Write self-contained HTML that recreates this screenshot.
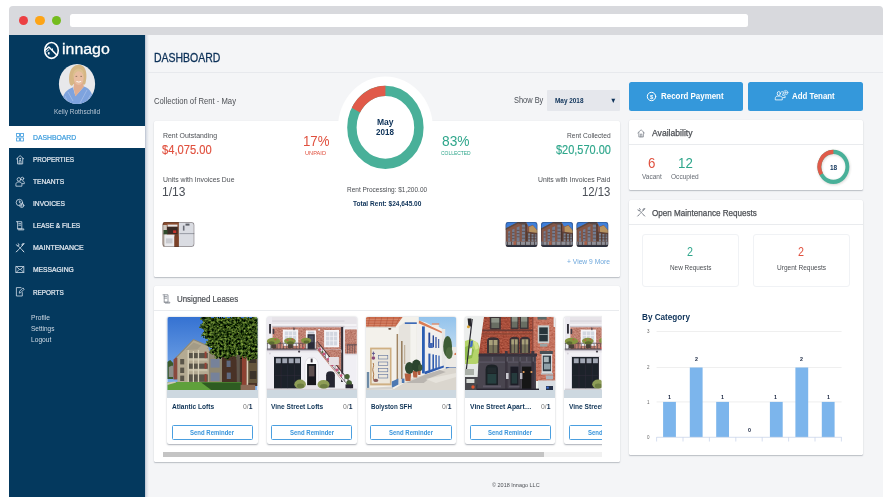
<!DOCTYPE html>
<html lang="en">
<head>
<meta charset="utf-8">
<title>Innago Dashboard</title>
<style>
html,body{margin:0;padding:0}
body{width:890px;height:500px;overflow:hidden;position:relative;background:#fff;font-family:"Liberation Sans",Arial,sans-serif}
div,span,svg{position:absolute;box-sizing:border-box}
.t i{font-style:normal;font-weight:400;color:#777}
.t{white-space:nowrap;line-height:1;transform-origin:0 50%;display:block}
.chrome{left:9px;top:6px;width:874px;height:29.2px;background:#d8d9dd;border-radius:4px 4px 0 0}
.dot{width:9.2px;height:9.2px;border-radius:50%;top:15.6px}
.url{left:69.8px;top:14px;width:677.8px;height:12.7px;background:#fff;border-radius:2.5px}
.page{left:9px;top:35px;width:874px;height:461.8px;background:#f4f5f7}
.side{left:9px;top:35px;width:136px;height:461.8px;background:#04395e}
.sideshadow{left:145px;top:35px;width:4px;height:461.8px;background:linear-gradient(90deg,#b9c1cf,#dde1e8 40%,#f4f5f7)}
.hline{left:146.5px;top:72px;width:736.5px;height:1px;background:#e7e9ed}
.active{left:9px;top:126px;width:135.9px;height:22px;background:#fff}
.card{background:#fff;border-radius:1.5px;box-shadow:0 1px 1.2px rgba(40,50,70,.28),0 0 1px rgba(40,50,70,.10)}
.div{height:1px;background:#e9ebee}
.btn{background:#3498db;border-radius:2.5px;height:28.7px;top:82px}
.sel{left:547.2px;top:90.3px;width:72.8px;height:20.6px;background:#e5e7ec;border-radius:1px}
.box{border:1px solid #f0f2f5;border-radius:3px;top:234.1px;width:97.3px;height:53.2px}
.lc{top:317px;width:90.4px;height:126.6px;background:#fff;border-radius:2px;box-shadow:0 .6px 1.6px rgba(30,40,60,.38)}
.strip{left:0;top:73px;width:90.4px;height:7.8px;background:#cdd8e0}
.rb{left:4.6px;top:108.2px;width:81.2px;height:14.4px;border:1px solid #4a9fe0;border-radius:1.5px}
.clip{left:160px;top:312px;width:441.6px;height:140px;overflow:hidden}
</style>
</head>
<body>
<div class="chrome"></div>
<div class="dot" style="left:18.8px;background:#ec4043"></div>
<div class="dot" style="left:35.4px;background:#fda416"></div>
<div class="dot" style="left:51.9px;background:#74bc1d"></div>
<div class="url"></div>
<div class="page"></div>
<div class="side"></div>
<div class="sideshadow"></div>
<div class="hline"></div>
<div class="active"></div>

<!-- collection of rent -->
<div class="card" style="left:153.5px;top:121px;width:466px;height:155.6px"></div>
<div class="sel"></div>

<!-- unsigned leases -->
<div class="card" style="left:153.5px;top:286px;width:466px;height:176.2px"></div>
<div class="div" style="left:153.5px;top:310.3px;width:465.8px"></div>
<div class="clip">
  <div class="lc" style="left:7.2px;top:5px"><div class="strip"></div><div class="rb"></div></div>
  <div class="lc" style="left:106.5px;top:5px"><div class="strip"></div><div class="rb"></div></div>
  <div class="lc" style="left:205.8px;top:5px"><div class="strip"></div><div class="rb"></div></div>
  <div class="lc" style="left:305px;top:5px"><div class="strip"></div><div class="rb"></div></div>
  <div class="lc" style="left:404.4px;top:5px"><div class="strip"></div><div class="rb"></div></div>
</div>
<div style="left:163.2px;top:452.1px;width:438.4px;height:4.6px;background:#f1f1f1"></div>
<div style="left:163.2px;top:452.1px;width:380.6px;height:4.6px;background:#c4c4c4"></div>

<!-- right column -->
<div class="btn" style="left:628.6px;width:114.5px"></div>
<div class="btn" style="left:748px;width:114.6px"></div>
<div class="card" style="left:628.6px;top:120px;width:234px;height:70.4px"></div>
<div class="div" style="left:628.6px;top:143.8px;width:234px"></div>
<div class="card" style="left:628.6px;top:200.3px;width:234px;height:254.7px"></div>
<div class="div" style="left:628.6px;top:223.6px;width:234px"></div>
<div class="box" style="left:641.8px"></div>
<div class="box" style="left:752.6px"></div>

<svg width="890" height="500" viewBox="0 0 890 500" style="left:0;top:0">
<defs>
  <filter id="soft2" x="-20%" y="-20%" width="140%" height="140%"><feGaussianBlur stdDeviation=".9"/></filter>
  <filter id="brick2" x="0" y="0" width="100%" height="100%" color-interpolation-filters="sRGB">
    <feTurbulence type="fractalNoise" baseFrequency=".45 .8" numOctaves="2" seed="9" result="n"/>
    <feColorMatrix in="n" type="matrix" values=".3 0 0 0 .49  .27 0 0 0 .16  .24 0 0 0 .10  0 0 0 0 1" result="c"/>
    <feComposite in="c" in2="SourceGraphic" operator="in"/>
  </filter>
  <filter id="brick3" x="0" y="0" width="100%" height="100%" color-interpolation-filters="sRGB">
    <feTurbulence type="fractalNoise" baseFrequency=".45 .8" numOctaves="2" seed="4" result="n"/>
    <feColorMatrix in="n" type="matrix" values=".24 0 0 0 .64  .27 0 0 0 .30  .27 0 0 0 .22  0 0 0 0 1" result="c"/>
    <feComposite in="c" in2="SourceGraphic" operator="in"/>
  </filter>
  <filter id="brick" x="0" y="0" width="100%" height="100%" color-interpolation-filters="sRGB">
    <feTurbulence type="fractalNoise" baseFrequency=".5 .9" numOctaves="2" seed="5" result="n"/>
    <feColorMatrix in="n" type="matrix" values=".22 0 0 0 .64  .28 0 0 0 .36  .28 0 0 0 .30  0 0 0 0 1" result="c"/>
    <feComposite in="c" in2="SourceGraphic" operator="in"/>
  </filter>
  <filter id="leaf" x="0" y="0" width="100%" height="100%" color-interpolation-filters="sRGB">
    <feTurbulence type="fractalNoise" baseFrequency=".42" numOctaves="3" seed="11" result="n"/>
    <feDisplacementMap in="SourceGraphic" in2="n" scale="5" xChannelSelector="R" yChannelSelector="G" result="shape"/>
    <feColorMatrix in="n" type="matrix" values="1.05 0 0 0 -.33  1.15 0 0 0 -.28  .55 0 0 0 -.19  0 0 0 0 1" result="c"/>
    <feComposite in="c" in2="shape" operator="in" result="cc"/>
    <feGaussianBlur in="cc" stdDeviation=".3"/>
  </filter>
  <filter id="soft" x="-5%" y="-5%" width="110%" height="110%"><feGaussianBlur stdDeviation=".35"/></filter>
  <clipPath id="cpPhoto"><path d="M0 2 Q0 0 2 0 H88.4 Q90.4 0 90.4 2 V73 H0 Z"/></clipPath>
  <clipPath id="cpLease"><rect x="160" y="312" width="441.6" height="140"/></clipPath>
  <clipPath id="cpThumb"><rect x="0" y="0" width="32" height="25" rx="3" ry="3"/></clipPath>
  <clipPath id="cpAv"><ellipse cx="0" cy="0" rx="18.1" ry="20"/></clipPath>
  <linearGradient id="sky1" x1="0" y1="0" x2="0" y2="1"><stop offset="0" stop-color="#3572d2"/><stop offset="1" stop-color="#86b4ec"/></linearGradient>
  <linearGradient id="sky3" x1="0" y1="0" x2="0" y2="1"><stop offset="0" stop-color="#93c3ec"/><stop offset="1" stop-color="#dbe9f4"/></linearGradient>
  <g id="bthumb" clip-path="url(#cpThumb)">
    <rect width="32" height="25" fill="#855646"/>
    <g filter="url(#soft)">
    <path d="M0 0H12.5L0 6.4Z" fill="#3d7dd8"/>
    <path d="M20.6 0H32V8.4L27.4 3 23 4.4Z" fill="#3f80da"/>
    <path d="M23.6 5L27.4 3.4 32 8.8V11H23.6Z" fill="#b8935f"/>
    <path d="M21 9.4L32 11V25H21Z" fill="#5f4238"/>
    <path d="M0 6.6L12.6 0 20.6 0 21 3V4.2L12.8 1.4 0 8Z" fill="#5b4a44"/>
    <g fill="#737c90"><path d="M2.6 9.6l2-.8v10.4h-2z"/><path d="M6.6 7.8l2.4-1v12.4H6.6z"/><path d="M11.2 5.4l2.8-1.2v15h-2.8z"/><rect x="16.4" y="2.6" width="3.2" height="16.6"/></g>
    <path d="M2.6 12h2M2.6 15h2M6.6 10.6h2.4M6.6 13.6h2.4M6.6 16.6h2.4M11.2 8.4h2.8M11.2 11.6h2.8M11.2 14.8h2.8M16.4 6h3.2M16.4 9.4h3.2M16.4 12.8h3.2M16.4 16.2h3.2" stroke="#5a4038" stroke-width=".7"/>
    <rect x="20" y="2" width="1.2" height="19" fill="#4a342e"/>
    <g fill="#7c8494"><rect x="22.6" y="11.4" width="2" height="8"/><rect x="26" y="12" width="2" height="7.4"/><rect x="29.2" y="12.4" width="1.8" height="7"/></g>
    <path d="M22.6 14h8.4M22.6 16.8h8.4" stroke="#4f372f" stroke-width=".7"/>
    <rect x="0" y="19.6" width="32" height="3.4" fill="#8f8f96"/>
    <path d="M2 19.6v3.4M6 19.6v3.4M10.6 19.6v3.4M15 19.6v3.4M20 19.6v3.4M25 19.6v3.4M29 19.6v3.4" stroke="#4a4448" stroke-width=".9"/>
    <rect x="8" y="19.4" width="2.6" height="3.8" fill="#a8604a"/>
    <rect x="0" y="22.9" width="32" height="2.1" fill="#33333a"/>
    </g>
    <rect x=".4" y=".4" width="31.2" height="24.2" rx="2.8" fill="none" stroke="#1c2f4a" stroke-opacity=".45" stroke-width=".8"/>
  </g>
  <g id="photo2" clip-path="url(#cpPhoto)">
    <rect width="90.4" height="73" fill="#f0eff4"/>
    <g filter="url(#soft)">
    <rect y="0" width="90.4" height="10.4" fill="#e7e4e9"/>
    <rect y="3.6" width="78" height=".9" fill="#d2ced6"/>
    <rect x="4" y="7.2" width="86" height="1.6" fill="#f6f5f8"/>
    <rect x="4" y="8.8" width="74" height="1.5" fill="#cbc5cc"/>
    <rect x="6" y="10.3" width="69.4" height="22.4" fill="#b9705f" filter="url(#brick)"/>
    <rect x="78.4" y="12.4" width="12" height="24.4" fill="#b06a5a" filter="url(#brick)"/>
    <rect x="0" y="0" width="5.6" height="33" fill="#eceaf0"/>
    <rect x="2.6" y="7" width="1.9" height="9.6" fill="#33303a"/>
    <rect x="6.2" y="12" width="1.6" height="5" fill="#3f3a46"/>
    <rect x="16.3" y="12.6" width="15.4" height="16.2" fill="#f6f5f8"/><rect x="18.2" y="14.4" width="11.6" height="12.8" fill="#d3d7e0"/>
    <path d="M22.1 14.4v12.8M26 14.4v12.8M18.2 18.6h11.6M18.2 22.9h11.6" stroke="#f6f5f8" stroke-width=".7"/>
    <rect x="39.4" y="13.4" width="10.2" height="19.4" fill="#f6f5f8"/><rect x="41" y="17.2" width="7.3" height="15.4" fill="#2a2c37"/><rect x="41.4" y="14.6" width="6.4" height="2" fill="#bfc4cf"/>
    <rect x="42.2" y="18.6" width="4.8" height="6.6" fill="#4a4e5e"/>
    <rect x="57.6" y="13" width="14.9" height="17.3" fill="#f6f5f8"/><rect x="59.4" y="14.8" width="11.3" height="13.6" fill="#d3d7e0"/>
    <path d="M63.2 14.8v13.6M67 14.8v13.6M59.4 19.3h11.3M59.4 23.8h11.3" stroke="#f6f5f8" stroke-width=".7"/>
    <rect x="74.6" y="10" width="2.1" height="55" fill="#322d36"/>
    <rect x="27" y="10.6" width="1" height="2.6" fill="#3a343c"/><circle cx="52.6" cy="12.8" r="1" fill="#e9e6ea"/>
    <!-- balcony -->
    <rect x="0" y="31.6" width="50" height="1.2" fill="#3d3841"/>
    <path d="M1 25.4v6.4M4.2 27v5M7.4 27v5M10.6 27v5M13.8 25v7M17 27v5M20.2 27v5M23.4 27v5M26.6 25v7M29.8 27v5M33 27v5M36.2 27v5M39.4 27v5M49.6 25v7" stroke="#3d3841" stroke-width=".55"/>
    <rect x="0" y="25.8" width="40" height=".7" fill="#3d3841"/>
    <g fill="#85953f"><ellipse cx="7" cy="24.2" rx="6.6" ry="3.4"/><ellipse cx="23.4" cy="24" rx="5.8" ry="3.2"/><ellipse cx="39.6" cy="23.6" rx="5" ry="2.8"/></g>
    <g fill="#5c6a30"><ellipse cx="5" cy="26" rx="3" ry="1.8"/><ellipse cx="24" cy="26" rx="3.4" ry="1.8"/><ellipse cx="40" cy="25" rx="3" ry="1.4"/></g>
    <g fill="#cf4a4a"><circle cx="9" cy="22.6" r=".8"/><circle cx="21" cy="23" r=".8"/><circle cx="26" cy="22.4" r=".8"/><circle cx="36.6" cy="31" r=".9"/></g>
    <g fill="#4a4038"><rect x="4.6" y="27.4" width="5" height="4"/><rect x="21.4" y="27.2" width="5" height="4"/></g>
    <rect x="0" y="32.7" width="75" height="1.5" fill="#c2bec9"/>
    <rect x="0" y="34.2" width="75" height="1.4" fill="#e9e7ec"/>
    <circle cx="32.6" cy="34.6" r="1.1" fill="#4d4753"/><circle cx="3.4" cy="36.6" r="1" fill="#d6d2da"/>
    <!-- lower -->
    <rect x="7.5" y="39.6" width="27" height="32" fill="#1e2029"/>
    <rect x="6.9" y="39" width="28.2" height="1" fill="#d9d6de"/>
    <g fill="#a1a7b4"><rect x="9.4" y="41.4" width="4.9" height="4.8"/><rect x="15.8" y="41.4" width="4.9" height="4.8"/><rect x="22.2" y="41.4" width="4.9" height="4.8"/><rect x="28.6" y="41.4" width="4.9" height="4.8"/></g>
    <path d="M21.2 47.4v24.2M14.6 47.4v24M27.8 47.4v24M8.4 58.4h25.4" stroke="#30333e" stroke-width=".5"/>
    <path d="M38.4 72V49Q38.4 40.4 45.1 40.4Q51.8 40.4 51.8 49V72Z" fill="#fafafc" stroke="#dcd9e1" stroke-width=".7"/>
    <rect x="40.6" y="47" width="9" height="21.4" fill="#16171d"/>
    <rect x="42.3" y="48.8" width="5.6" height="10.6" fill="#5d4f50"/>
    <rect x="44.2" y="41.6" width="1.9" height="3.8" fill="#37323b"/>
    <rect x="38" y="68.4" width="14.4" height="3" fill="#e4e1e6"/>
    <path d="M59.6 70.4V58.2Q59.6 54.2 64 54.2Q68.4 54.2 68.4 58.2V70.4Z" fill="#272730"/>
    <!-- stairs -->
    <path d="M50.6 32.7H74.6V62.6Z" fill="#b9705f" filter="url(#brick)"/>
    <path d="M51 30.6L55 30.6 86 69.4 86 72H82Z" fill="#f3f2f6"/>
    <path d="M50.6 24.2L86 68" stroke="#3a3038" stroke-width=".9"/>
    <path d="M51.4 31.4L84 71.4" stroke="#5a4e58" stroke-width=".7"/>
    <path d="M52.6 26.8v6M55.8 30.8v6M59 34.8v6M62.2 38.8v6M65.4 42.8v6M68.6 46.8v6M71.8 50.8v6M75 54.8v6M78.2 58.8v6M81.4 62.8v6M84.6 66.4v5" stroke="#3a3038" stroke-width=".5"/>
    <g fill="#c9517a"><circle cx="53.4" cy="32.4" r="1.3"/><circle cx="57.4" cy="37" r="1.4"/><circle cx="61.6" cy="42.4" r="1.4"/><circle cx="66" cy="47.8" r="1.4"/><circle cx="70.4" cy="53" r="1.4"/><circle cx="74.6" cy="58.6" r="1.3"/></g>
    <g fill="#4f6a3a"><circle cx="56" cy="35" r="1"/><circle cx="64" cy="45" r="1"/><circle cx="72.6" cy="55.8" r="1"/></g>
    <g fill="#466235"><circle cx="80.6" cy="59.6" r="2.6"/><circle cx="82.6" cy="66" r="2.8"/></g>
    <rect x="79" y="67.4" width="7.6" height="4" fill="#2a2830"/>
    <rect x="80" y="27.4" width="10.4" height=".9" fill="#48414b"/><path d="M81 28v8.6M83.4 28v8.6M85.8 28v8.6M88.2 28v8.6" stroke="#48414b" stroke-width=".55"/>
    <rect x="78.4" y="36.8" width="12" height="1.4" fill="#dedbe2"/>
    <rect x="62.4" y="40" width="10" height="8" fill="#e6dfe2"/>
    <g fill="#8e9d57"><ellipse cx="33.6" cy="67.2" rx="5.8" ry="4.7"/><ellipse cx="57" cy="67.4" rx="6" ry="4.5"/></g>
    <g fill="#6d7d42"><ellipse cx="34" cy="69" rx="3.6" ry="2.4"/><ellipse cx="57.4" cy="69.2" rx="3.8" ry="2.3"/></g>
    <rect y="71.6" width="90.4" height="1.4" fill="#d3d0d5"/>
    </g>
  </g>
</defs>
<!-- logo mark -->
<g fill="none" stroke="#fff" stroke-width="1.6" stroke-linecap="round" stroke-linejoin="round">
  <ellipse cx="51.5" cy="50.45" rx="6.75" ry="7.9"/>
  <path d="M45.4 49.9L48.9 47 57 55.2" stroke-width="1.5"/>
  <path d="M46.8 51.4L49 49.6" stroke-width="1"/>
  <path d="M52.5 48.8v1.5" stroke-width=".9"/>
</g>
<rect x="47.9" y="52.2" width="1.7" height="2.2" fill="#fff"/>
<!-- avatar -->
<g transform="translate(77 84)">
  <g clip-path="url(#cpAv)">
    <rect x="-19" y="-21" width="38" height="42" fill="#e8e8eb"/>
    <path d="M-15 21C-15 9 -10 5.6 -4 3.2L-1.6 12 7 2.4C14 5 16.4 10 16.4 21Z" fill="#7ea3de"/>
    <path d="M-9 8l5 9M-12 12l4 9M10 6l-7 13M14 10l-6 11" stroke="#a9c2ea" stroke-width=".7" fill="none"/>
    <path d="M-7 .6C-9.4 -8 -6.6 -19 1.6 -19.2C9.6 -19.2 10.6 -9 8.6 -1.2C8 1 6.4 1.4 5.6 0H-3.4C-4.4 2 -6.2 2.4 -7 .6Z" fill="#d6b684"/>
    <path d="M-3.6 3.4L-2.2 -3H5L7 2.6 -1.6 12.4Z" fill="#e0ad90"/>
    <ellipse cx="1.7" cy="-6.2" rx="5" ry="7.2" fill="#e9bda1"/>
    <path d="M-4 -5C-4.6 -11 -2.6 -14.6 1.2 -15.4C5 -15.4 7 -12.4 7 -8.4C5.4 -11.4 3 -13 .4 -12.6C-2 -11.6 -3.4 -8.6 -4 -5Z" fill="#dcc090"/>
    <path d="M-.6 -2.6Q1.8 -1.2 4.2 -2.6" stroke="#fff" stroke-width=".9" fill="none"/>
    <path d="M-1.4 -7.6h1.6M3.4 -7.6h1.6" stroke="#6b5848" stroke-width=".7"/>
  </g>
</g>
<!-- sidebar icons -->
<g fill="none" stroke="#3a9ade" stroke-width=".8">
  <rect x="16.6" y="133.4" width="2.9" height="3.1"/><rect x="20.6" y="133.4" width="2.9" height="3.1"/>
  <rect x="16.6" y="137.9" width="2.9" height="3.1"/><rect x="20.6" y="137.9" width="2.9" height="3.1"/>
</g>
<g fill="none" stroke="#d3dde8" stroke-width=".8" stroke-linejoin="round" stroke-linecap="round">
  <!-- properties: house -->
  <path d="M16.5 158.9L20.1 155.6 23.7 158.9M17.5 158.3V163.9H22.7V158.3M19.2 163.9v-3.3h1.8v3.3"/>
  <circle cx="20.1" cy="158.8" r=".5"/>
  <!-- tenants -->
  <circle cx="18.9" cy="179.4" r="1.8"/><path d="M15.9 185.8v-1.4c0-1.7 1.3-2.5 3-2.5s3 .8 3 2.5v1.4Z"/><circle cx="22.3" cy="178.6" r="1.4"/><path d="M22.6 180.8c1.1.2 1.7.9 1.7 2v.9h-2"/>
  <!-- invoices -->
  <circle cx="19.4" cy="202.5" r="3.2"/><path d="M19.4 200.8v1.9l1.3-.9"/><circle cx="21.8" cy="205.4" r="2.1"/><path d="M21.8 204.3v2.2"/>
  <!-- lease -->
  <path d="M16.4 221.7h5.4v7.2H17.6V221.7M18.8 223.6h1.8M18.8 225.2h1.8M17.6 228.9h6.2v1h-5.2"/>
  <!-- maintenance -->
  <path d="M17.6 245.4l5.6 5.6M22.8 245.2l-5.6 5.8"/>
  <path d="M16.4 244.9a1.3 1.3 0 1 0 1.8-1.4M23.8 243.8l-1.8.3.2 1.7 1.6-2Z M22.6 250.6l1.3 1.3M17.4 250.8l-1.1 1.1" stroke-width="1"/>
  <!-- messaging -->
  <rect x="16.2" y="266.5" width="7.6" height="6"/><path d="M16.2 266.5l3.8 3.3 3.8-3.3M16.2 272.5l2.7-2.8M23.8 272.5l-2.7-2.8"/>
  <!-- reports -->
  <path d="M22.3 292.6V296H16.4V287.6h4.6"/><path d="M19.3 292.8l.4-1.7 3.2-3.2 1.3 1.3-3.2 3.2Z"/>
</g>
<!-- halo + donut -->
<ellipse cx="385.4" cy="127.4" rx="47.4" ry="50.8" fill="#fff"/>
<g transform="translate(385.4 127.4) scale(1 1.089)">
  <circle r="33.5" fill="none" stroke="#49b099" stroke-width="9.4"/>
  <path d="M0 -33.5A33.5 33.5 0 0 0 -29.5 -15.88" fill="none" stroke="#e05a49" stroke-width="9.4"/>
</g>
<!-- select arrow handled as text -->
<!-- thumbs -->
<g transform="translate(162.5 222)" clip-path="url(#cpThumb)">
  <rect width="32" height="25" fill="#d9dbe1"/>
  <rect x="0" y="0" width="16.4" height="25" fill="#6f3f2a"/>
  <rect x="0" y="3" width="4.4" height="22" fill="#b9aea4"/>
  <rect x="0" y="0" width="16.4" height="3" fill="#8b4d30"/>
  <rect x="5" y="2.6" width="10" height="2" fill="#e8e8ea"/>
  <rect x="4.6" y="5" width="10.4" height="7" fill="#3a2a25"/>
  <rect x="0" y="3" width="3.8" height="8" fill="#cfc8c0"/>
  <rect x="1" y="8" width="4" height="4.4" fill="#2f4a2b"/>
  <rect x="10.6" y="8.4" width="3.2" height="2.6" fill="#c8342c"/>
  <rect x="2" y="12.6" width="10" height="12.4" fill="#e9e9ec"/>
  <rect x="3.4" y="16.4" width="6.6" height="5" fill="#c9cacf"/>
  <rect x="12" y="14.4" width="4.4" height="10.6" fill="#7b4128"/>
  <rect x="16.4" y="0" width="15.6" height="25" fill="#dadce2"/>
  <rect x="17" y="11.2" width="15" height=".9" fill="#8f939c"/>
  <rect x="20.4" y="3.6" width="1.6" height="5" fill="#6a6d76"/><rect x="23" y="1.6" width="4" height="2" fill="#5b5e66"/>
  <rect x=".4" y=".4" width="31.2" height="24.2" rx="2.8" fill="none" stroke="#3a2e2a" stroke-opacity=".5" stroke-width=".8"/>
</g>
<use href="#bthumb" x="505.5" y="222"/>
<use href="#bthumb" x="541" y="222"/>
<use href="#bthumb" x="576.4" y="222"/>
<!-- card header icons -->
<g fill="none" stroke="#7c828b" stroke-width=".75" stroke-linejoin="round" stroke-linecap="round">
  <path d="M163 294.8h5v7.4h-3.8V294.8M164.2 296.6h2.6M164.2 298.2h2.6M164.2 302.2h5.6v.9h-4.4"/>
  <path d="M637.8 132.9L641.1 129.8 644.4 132.9M638.8 132.3V136.9H643.4V132.3M640.3 136.9v-2.8h1.6v2.8"/>
  <path d="M639 210.2l5 5M643.6 210l-5 5.2"/><path d="M637.9 209.8a1.2 1.2 0 1 0 1.6-1.3M644.6 208.8l-1.6.3.2 1.5 1.4-1.8ZM643.5 214.9l1.2 1.2M638.7 215.1l-1 1" stroke-width=".95"/>
</g>
<!-- button icons -->
<g fill="none" stroke="#fff" stroke-width=".8" stroke-linecap="round" stroke-linejoin="round">
  <circle cx="651.5" cy="96.5" r="4.2" stroke-width="1"/>
  <ellipse cx="778.8" cy="93.5" rx="1.55" ry="2"/><path d="M775.3 99.5v-1.2c0-1.5 1.1-2.2 2.5-2.2h2c1.4 0 2.5.7 2.5 2.2v1.2Z"/>
  <path d="M781 92.2a1.4 1.4 0 1 1 1.4 2.2"/><path d="M782.7 95.2c1.6 0 2.5.7 2.5 1.9v.5h-2.2"/>
  <circle cx="785.7" cy="92.6" r="2.2" stroke-width=".55" fill="#3498db"/><path d="M785.7 91.5v2.2M784.6 92.6h2.2" stroke-width=".6"/>
</g>
<!-- small donut -->
<g transform="translate(833.4 166.8) scale(1 1.072)">
  <circle r="14" cx=".5" cy=".9" fill="none" stroke="#5a4a40" stroke-opacity=".22" stroke-width="4.2" filter="url(#soft2)"/>
  <circle r="14" fill="none" stroke="#49b099" stroke-width="3.9"/>
  <path d="M0 -14A14 14 0 0 0 -12.12 7" fill="none" stroke="#e05a49" stroke-width="3.9"/>
</g>
<!-- lease photos -->
<g clip-path="url(#cpLease)">
  <g transform="translate(167.2 317)" clip-path="url(#cpPhoto)">
    <rect width="90.4" height="73" fill="url(#sky1)"/>
    <g filter="url(#soft)">
    <!-- far left -->
    <path d="M0 45L3 43 6 46V62H0Z" fill="#3b5a2c"/>
    <path d="M1.6 50L5 48.4 6.6 50V60H1.6Z" fill="#8d8f8a"/>
    <!-- red brick left wing -->
    <path d="M6.3 42.4L9.6 39.4 10.6 40.6V62.4H6.3Z" fill="#8a4a3c"/>
    <!-- beige building -->
    <path d="M9.4 40.2L26.3 22.8 41 29 41.8 33.6 54.8 38V65.4H10.2V41Z" fill="#b4aa92"/>
    <path d="M9.2 40.4L26.3 22.6 41.2 29" fill="none" stroke="#8f8873" stroke-width="1.1"/>
    <path d="M18.4 33L26.3 25.4 34 28.6 30 32.4Z" fill="#a39b86"/>
    <path d="M41.7 34H54.8V65.4H41.7Z" fill="#8f8872"/>
    <!-- balconies -->
    <g fill="#5a5549"><rect x="13" y="42" width="4" height="5.4"/><rect x="13" y="50.6" width="4" height="5.4"/><rect x="13" y="58.6" width="4" height="5.4"/>
      <rect x="21.6" y="36" width="19" height="7"/><rect x="21.6" y="46.6" width="19" height="7"/><rect x="21.6" y="57.4" width="19" height="7.4"/></g>
    <g fill="#c9c0a8"><rect x="21.6" y="41.2" width="19" height="2.4"/><rect x="21.6" y="51.8" width="19" height="2.4"/></g>
    <g fill="#964236"><rect x="37.4" y="34.6" width="2" height="6.6"/><rect x="37.4" y="45.8" width="2" height="6"/><rect x="37.4" y="57" width="2" height="7.6"/></g>
    <g fill="#d8d0b8"><rect x="20.4" y="33" width="1.3" height="32"/><rect x="25.6" y="34" width="1.2" height="31"/><rect x="30.6" y="33" width="1.3" height="32"/></g>
    <g fill="#76829a"><rect x="43.4" y="42" width="9" height="8.6"/><rect x="43.4" y="55.6" width="9" height="8.4"/></g>
    <!-- dark brick right -->
    <path d="M54.8 38H90.4V69H54.8Z" fill="#4a3128"/>
    <g fill="#5e6b80"><rect x="59.4" y="43.6" width="4" height="6.4"/><rect x="59.6" y="55.6" width="4" height="6.4"/></g>
    <path d="M80.4 36H90.4V66H80.4Z" fill="#65573d"/>
    <path d="M82 39h7v7h-7zM82.6 54h6.6v8h-6.6z" fill="#3a332c"/>
    <path d="M74.8 38H79.4V68H74.8Z" fill="#8e4232"/>
    <path d="M79.4 38h1.6v30h-1.6z" fill="#d9cdb8"/>
    <!-- tree canopy -->
    <path filter="url(#leaf)" d="M33 0H96V44L86 41 82 44 76 40 71 43 66 39 60 43 55 40 50 42 46 38 42 36 44 31 38 28 41 22 34 19 37 13 32 10 36 5Z" fill="#3b581f"/>
    <!-- trunk -->
    <path d="M69.2 38L72.6 38 72.6 73H69.8Z" fill="#5e564c"/>
    <!-- grass -->
    <path d="M0 65H74V73H0Z" fill="#5fa03a"/>
    <path d="M34 65.4H74V73H44Z" fill="#2f5c24"/>
    <path d="M0 65.6L8 64.4 9 65.6 0 68Z" fill="#cfc8b6"/>
    <path d="M73.4 67.8H88V73H73.4Z" fill="#8c6a56"/>
    </g>
  </g>
  <use href="#photo2" x="266.5" y="317"/>
  <g transform="translate(365.8 317)" clip-path="url(#cpPhoto)">
    <g filter="url(#soft)">
    <rect width="90.4" height="73" fill="#f2f0ea"/>
    <path d="M52 0H90.4V52H52Z" fill="url(#sky3)"/>
    <!-- second building -->
    <path d="M51 6L53.4 3.4 60 5.4 66 8.6 70 8.2 76 11.6 78 15 78 52 60 58 51 58Z" fill="#f1f0ee"/>
    <path d="M51.6 5.6L53.4 3.6 78 15.4V17L53.4 6.4Z" fill="#d97b55"/>
    <path d="M66 6.6h7v3.4h-7z" fill="#ecebe8"/><path d="M66 6.4h7.4v1.2H66z" fill="#d97b55"/>
    <rect x="76" y="12" width="3.4" height="40" fill="#e7e6e4"/>
    <rect x="56.2" y="9.4" width="2.8" height="47" fill="#2b5eb3"/>
    <g fill="#28489a"><rect x="62.6" y="15.6" width="1.8" height="14.4"/><rect x="66.8" y="18.4" width="1.4" height="12"/><rect x="69.6" y="20" width="1.2" height="11"/><rect x="72.4" y="22" width="1" height="9"/></g>
    <path d="M62.8 26h4.2v5h-4.2z" fill="#3f66b5"/>
    <g fill="#2f5bb0"><rect x="62.6" y="36.6" width="2" height="17"/><rect x="66.6" y="37.4" width="1.6" height="15"/><rect x="69.6" y="38" width="1.4" height="13.6"/><rect x="72.6" y="38.6" width="1.2" height="12"/></g>
    <path d="M59 54.6L78 48.6V50.6L59 57.4Z" fill="#2f5bb0"/>
    <path d="M79.4 30h11v22h-11z" fill="#eceae6"/>
    <path d="M80 50h10.4v2.2H80z" fill="#3560b0"/>
    <path d="M88.6 36.4l1.8-1v2.6h-1.8z" fill="#d9764f"/>
    <ellipse cx="81.8" cy="29.6" rx="4.4" ry="10.6" fill="#3e5b35"/>
    <ellipse cx="83.4" cy="36" rx="3.4" ry="6" fill="#4d6b3f"/>
    <!-- ground -->
    <path d="M26 73L44 62 60 57.2 84 50.6 90.4 50.6V73Z" fill="#dad6ce"/>
    <path d="M40 66L60 57.4 74 53 80 55 64 61 58 66Z" fill="#b9b5b0"/>
    <path d="M60 62L90.4 56V60L70 66Z" fill="#e6e3dc"/>
    <!-- left building -->
    <path d="M0 0H53V6H50.6V58L38 66 28 72 0 73Z" fill="#f3f1eb"/>
    <path d="M33 9.6L39 5.2H50.6V58L33 68.4Z" fill="#e6e3dd"/>
    <path d="M44.6 6.8H50.6V56.6L44.6 58.6Z" fill="#f4f3ef"/>
    <rect x="39" y="5.4" width="12" height="1.5" fill="#2b5eb3"/>
    <path d="M0 0H36.8L29.8 9.8H0Z" fill="#c96a4b"/>
    <path d="M0 2.4H35M0 5H33M0 7.6H31.4" stroke="#e3a48c" stroke-width=".5"/>
    <path d="M4 0L2 9.8M10 0L8 9.8M16 0L14 9.8M22 0L20 9.8M28 0L26 9.8M34 0L30 8" stroke="#a8513a" stroke-width=".5"/>
    <rect x="0" y="9.8" width="30" height="1.2" fill="#dedad3"/>
    <ellipse cx="24" cy="11.8" rx="1.6" ry=".9" fill="#5b3f33"/>
    <rect x="30.8" y="17" width="1.5" height="48" fill="#a08563"/>
    <rect x="35.2" y="24" width="1.6" height="38" fill="#9a8162"/>
    <rect x="38.4" y="28" width="1" height="19" fill="#b7a58a"/>
    <rect x="4.3" y="30.6" width="21.4" height="37.8" fill="#cfb083"/>
    <rect x="5.9" y="32.4" width="18.2" height="34" fill="#ece7dc"/>
    <g fill="none" stroke="#5b6f9c" stroke-width=".6"><rect x="12.6" y="38.6" width="9.4" height="3.4"/><rect x="12.6" y="45" width="9.4" height="3.4"/><rect x="12.6" y="51.4" width="9.4" height="3.4"/><rect x="12.6" y="57.6" width="9.4" height="3.4"/></g>
    <path d="M7.6 34.6v4M6.2 36.4h3" stroke="#5a4f8a" stroke-width=".9"/>
    <circle cx="7.6" cy="41" r="1.8" fill="#8a4a78"/>
    <path d="M7.4 46c1.6 3-1.6 6 0 9s-1 5 .6 8" fill="none" stroke="#b07b4a" stroke-width="1"/>
    <ellipse cx="10" cy="63.4" rx="2.4" ry="1.6" fill="#8a5a5a"/>
    <rect x="1" y="55" width="2.4" height="17" fill="#6d8aa6"/>
    <path d="M26 64.6L32.6 61.4V67.6L26 71Z" fill="#4e79b2"/>
    <path d="M0 71L26 69.4 28 72.4 0 73Z" fill="#d5d3cf"/>
    <rect x="36" y="61.6" width="2.6" height="4.4" fill="#4e79b2"/>
    <!-- plants -->
    <path d="M38.8 56.4H45.4L44.6 64H39.8Z" fill="#b5603f"/>
    <path d="M46.8 54H52L51.4 60.6H47.6Z" fill="#b5603f"/>
    <path d="M52 53h3l-.4 5h-2.2z" fill="#a9583b"/>
    <ellipse cx="43.6" cy="51" rx="4.4" ry="6" fill="#2f4a31"/>
    <ellipse cx="50.6" cy="48.6" rx="4.6" ry="6.2" fill="#2b442d"/>
    <ellipse cx="54.4" cy="50.6" rx="2.2" ry="3.4" fill="#3a5638"/>
    </g>
  </g>
  <g transform="translate(465 317)" clip-path="url(#cpPhoto)">
    <g filter="url(#soft)">
    <rect width="90.4" height="73" fill="#eef1ee"/>
    <!-- left strip -->
    <rect x="0" y="0" width="19" height="26" fill="#eceeed"/>
    <path d="M0 24L6 22 13 26 16 36 14 46 4 49 0 47Z" fill="#b4d46a"/>
    <path d="M0 30L5 28 9 33 7 41 0 43Z" fill="#8fba4e"/>
    <path d="M8 24l4 1 1.6 6-3 2z" fill="#d4e58e"/>
    <rect x="0" y="47" width="14" height="14" fill="#e4e8e6"/>
    <rect x="0" y="52" width="9" height="6" fill="#aab0a8"/>
    <rect x="0" y="60" width="14" height="13" fill="#4a4a4e"/>
    <rect x="1.4" y="62" width="8" height="4" fill="#d9ddd8"/>
    <circle cx="8" cy="70" r="1.7" fill="#e2562e"/><rect x="11.6" y="67.6" width="2.6" height="5.4" fill="#1d2030"/>
    <path d="M7.2 2L1.4 52" stroke="#2b2b33" stroke-width="1.2"/>
    <path d="M2.6 1.4h3.8l-.4 8H3.4z" fill="#25252b"/><circle cx="3.4" cy="9.8" r="1.5" fill="#d9a637"/>
    <path d="M5.6 24l2.4-.4-.6 6-2.4 .6z" fill="#3d67c4"/><path d="M4.6 31.4l2.6-.4-.8 7-2.4 .4z" fill="#e6e8f2"/>
    <!-- right brick -->
    <rect x="67" y="0" width="23.4" height="64" fill="#c26f5b" filter="url(#brick3)"/>
    <path d="M67 4h23.4M67 8h23.4M67 12h23.4M67 16h23.4M67 20h23.4M67 24h23.4M67 28h23.4M67 32h23.4M67 36h23.4M67 40h23.4M67 44h23.4M67 48h23.4M67 52h23.4M67 56h23.4M67 60h23.4" stroke="#d58e7c" stroke-width=".5"/>
    <rect x="72.6" y="0" width="9" height="2.6" fill="#5a6a6a"/>
    <rect x="72.8" y="8.4" width="11.4" height="18" fill="#c9cfcf"/><rect x="74.2" y="10.4" width="8.6" height="14" fill="#27353a"/><rect x="74.2" y="17" width="8.6" height=".9" fill="#9aa4a6"/>
    <rect x="75" y="27" width="7.4" height="2.6" fill="#9aa3a3"/>
    <rect x="74.8" y="34" width="13" height="3" fill="#4a4f55"/>
    <rect x="76.6" y="37" width="10.6" height="19" fill="#d6dcdf"/><rect x="77.8" y="38.6" width="8.2" height="15.6" fill="#2d3b44"/><rect x="79" y="46.6" width="6.4" height="5.8" fill="#8fa0a8"/><rect x="78.8" y="39.8" width="5" height="5.4" fill="#a9b6ba"/>
    <rect x="76" y="56" width="12" height="1.6" fill="#b9c0c4"/>
    <rect x="81" y="58.4" width="7" height="4" fill="#a9b3bc"/>
    <rect x="73" y="63.4" width="17.4" height="9.6" fill="#d9dee3"/>
    <rect x="81" y="69" width="7" height="4" fill="#26304a"/><rect x="81.4" y="69.6" width="2.4" height="2" fill="#3f6fd0"/>
    <rect x="88.6" y="0" width="1.8" height="10" fill="#e8ecee"/>
    <!-- main brick -->
    <path d="M19 0H68V38H13.6Z" fill="#b5553d" filter="url(#brick2)"/>
    <path d="M18.6 3h49M18.2 6h50M17.8 9h50M17.4 12h51M17 15h51M16.6 18h51M16.2 21h52M15.8 24h52M15.4 27h53M15 30h53M14.6 33h53" stroke="#c96a50" stroke-width=".45"/>
    <rect x="67" y="0" width="1.4" height="64" fill="#8f4a3c"/>
    <path d="M17.6 12.6H68V14.2H17.4Z" fill="#6a3a34"/>
    <path d="M17 16.2H68V17.4H16.8Z" fill="#8a4636"/>
    <!-- row1 windows -->
    <g fill="#3d3538"><rect x="24.8" y="0" width="11" height="12.6"/><rect x="45.6" y="0" width="8" height="12.2"/><rect x="54.6" y="0" width="9" height="12.2"/></g>
    <g fill="#676e64"><rect x="26.4" y="1" width="7.8" height="10"/><rect x="46.8" y="0" width="5.6" height="10.6"/><rect x="56" y="0" width="6.2" height="10.6"/></g>
    <g fill="#8d9488"><rect x="26.4" y="1" width="7.8" height="4.6"/><rect x="46.8" y="0" width="5.6" height="4.6"/><rect x="56" y="0" width="6.2" height="4.6"/></g>
    <!-- row2 windows -->
    <g fill="#3a3036"><path d="M22 36.6V23.6Q22 20.2 28.2 20.2Q34.4 20.2 34.4 23.6V36.6Z"/><path d="M44.6 36.6V23Q44.6 19.8 49.6 19.8Q54.4 19.8 54.4 23V36.6Z"/><path d="M55 36.6V23Q55 19.8 60 19.8Q65 19.8 65 23V36.6Z"/></g>
    <g fill="#777258"><rect x="24" y="23" width="8.4" height="13"/><rect x="46.4" y="22.4" width="6.2" height="13.6"/><rect x="56.8" y="22.4" width="6.4" height="13.6"/></g>
    <g fill="#a8a07a"><rect x="24" y="23" width="8.4" height="5"/><rect x="46.4" y="22.4" width="6.2" height="5"/><rect x="56.8" y="22.4" width="6.4" height="5"/></g>
    <path d="M28.2 23v13M49.5 22.4v13.6M60 22.4v13.6" stroke="#3a3036" stroke-width=".7"/>
    <!-- ground floor -->
    <path d="M13.8 37H71V73H12Z" fill="#494550"/>
    <path d="M14 36.6H72V39.4H13.6Z" fill="#37333c"/>
    <path d="M14 44.6H71V45.8H13.6Z" fill="#5c5864"/>
    <rect x="40" y="34" width="2.6" height="39" fill="#3a363f"/><rect x="66.4" y="34" width="3" height="39" fill="#3a363f"/><rect x="53.6" y="38" width="2" height="35" fill="#3d3942"/>
    <path d="M20.6 68.4V52Q20.6 47.6 26.8 47.6Q33 47.6 33 52V68.4Z" fill="#1d2127"/>
    <rect x="22.4" y="57" width="9" height="9.6" fill="#28403f"/><rect x="22.4" y="50.4" width="9" height="5.6" fill="#222a2e"/>
    <rect x="18" y="68.4" width="18" height="2" fill="#5d5965"/>
    <rect x="45.4" y="49.6" width="8" height="19" fill="#1b1f26"/><rect x="46.6" y="56" width="5.6" height="10.6" fill="#263b3d"/>
    <rect x="44" y="68.6" width="10.6" height="1.8" fill="#5d5965"/>
    <rect x="57" y="49.6" width="9.4" height="23.4" fill="#141318"/>
    <circle cx="58.6" cy="55" r="1.1" fill="#e9a05a"/><circle cx="66.4" cy="55" r="1.1" fill="#e9a05a"/>
    <rect x="41" y="56" width="2.6" height="6" fill="#c9c9cf"/><rect x="55" y="56" width="2.4" height="6" fill="#b9b9c2"/>
    <rect x="12" y="71.6" width="62" height="1.4" fill="#2a2830"/>
    <g fill="#5e5a66"><rect x="26.8" y="40" width="1.4" height="4.6"/><rect x="41.6" y="40" width="1.4" height="4.6"/><rect x="47.6" y="40" width="1.4" height="4.6"/><rect x="54.4" y="40" width="1.4" height="4.6"/><rect x="61" y="40" width="1.4" height="4.6"/><rect x="67.6" y="40" width="1.4" height="4.6"/></g>
    </g>
  </g>
  <use href="#photo2" x="564.4" y="317"/>
</g>
<!-- chart -->
<g stroke="#e8e8e8" stroke-width=".7">
  <path d="M656.6 331.5H841.6M656.6 367.5H841.6M656.6 401.9H841.6"/>
</g>
<g fill="#7cb5ec">
  <rect x="663.1" y="401.9" width="12.8" height="35.2"/>
  <rect x="689.8" y="367.5" width="12.8" height="69.6"/>
  <rect x="716.2" y="401.9" width="12.8" height="35.2"/>
  <rect x="769.9" y="401.9" width="12.8" height="35.2"/>
  <rect x="795.4" y="367.5" width="12.8" height="69.6"/>
  <rect x="821.8" y="401.9" width="12.8" height="35.2"/>
</g>
<path d="M656.6 437.3H841.6M656.6 437.1v4.4M683 437.1v4.4M709.4 437.1v4.4M735.8 437.1v4.4M762.2 437.1v4.4M788.6 437.1v4.4M815 437.1v4.4M841.4 437.1v4.4" stroke="#ccd6eb" stroke-width=".8" fill="none"/>

</svg>

<span class="t" style="left:62.40px;top:40.66px;font-size:15.4px;color:#fff;-webkit-text-stroke:0.3px #fff;transform:scaleX(1.0342);">innago</span>
<span class="t" style="left:54.00px;top:107.57px;font-size:7.6px;color:#b9c7d6;transform:scaleX(0.8514);">Kelly Rothschild</span>
<span class="t" style="left:33.30px;top:133.61px;font-size:7.9px;color:#3498db;-webkit-text-stroke:0.2px #3498db;transform:scaleX(0.8643);">DASHBOARD</span>
<span class="t" style="left:33.30px;top:155.61px;font-size:7.9px;color:#e4eaf1;-webkit-text-stroke:0.24px #e4eaf1;transform:scaleX(0.8084);">PROPERTIES</span>
<span class="t" style="left:33.30px;top:177.61px;font-size:7.9px;color:#e4eaf1;-webkit-text-stroke:0.24px #e4eaf1;transform:scaleX(0.8445);">TENANTS</span>
<span class="t" style="left:33.30px;top:200.11px;font-size:7.9px;color:#e4eaf1;-webkit-text-stroke:0.24px #e4eaf1;transform:scaleX(0.8457);">INVOICES</span>
<span class="t" style="left:33.30px;top:222.11px;font-size:7.9px;color:#e4eaf1;-webkit-text-stroke:0.24px #e4eaf1;transform:scaleX(0.8278);">LEASE &amp; FILES</span>
<span class="t" style="left:33.30px;top:244.11px;font-size:7.9px;color:#e4eaf1;-webkit-text-stroke:0.24px #e4eaf1;transform:scaleX(0.8827);">MAINTENANCE</span>
<span class="t" style="left:33.30px;top:266.11px;font-size:7.9px;color:#e4eaf1;-webkit-text-stroke:0.24px #e4eaf1;transform:scaleX(0.8536);">MESSAGING</span>
<span class="t" style="left:33.30px;top:288.61px;font-size:7.9px;color:#e4eaf1;-webkit-text-stroke:0.24px #e4eaf1;transform:scaleX(0.8076);">REPORTS</span>
<span class="t" style="left:31.00px;top:314.34px;font-size:7.4px;color:#cfd9e4;transform:scaleX(0.9068);">Profile</span>
<span class="t" style="left:31.00px;top:325.04px;font-size:7.4px;color:#cfd9e4;transform:scaleX(0.8758);">Settings</span>
<span class="t" style="left:31.00px;top:335.74px;font-size:7.4px;color:#cfd9e4;transform:scaleX(0.8979);">Logout</span>
<span class="t" style="left:153.80px;top:51.64px;font-size:12.0px;color:#0c3158;-webkit-text-stroke:0.3px #0c3158;transform:scaleX(0.8735);">DASHBOARD</span>
<span class="t" style="left:154.00px;top:96.78px;font-size:9px;color:#4c4f54;transform:scaleX(0.8537);">Collection of Rent - May</span>
<span class="t" style="left:513.50px;top:96.18px;font-size:9px;color:#4a4f57;transform:scaleX(0.8246);">Show By</span>
<span class="t" style="left:555.20px;top:97.37px;font-size:7.6px;color:#0c3158;font-weight:700;transform:scaleX(0.8437);">May 2018</span>
<span class="t" style="left:609.90px;top:96.64px;font-size:7.4px;color:#0c3158;transform:scaleX(0.9000);">&#9660;</span>
<span class="t" style="left:162.50px;top:131.78px;font-size:7.7px;color:#4c4f54;transform:scaleX(0.9023);">Rent Outstanding</span>
<span class="t" style="left:162.30px;top:144.06px;font-size:12.1px;color:#e0503e;-webkit-text-stroke:0.15px #e0503e;transform:scaleX(0.9217);">$4,075.00</span>
<span class="t" style="left:162.50px;top:176.48px;font-size:7.7px;color:#4c4f54;transform:scaleX(0.8948);">Units with Invoices Due</span>
<span class="t" style="left:162.30px;top:186.06px;font-size:12.1px;color:#4a4f57;transform:scaleX(0.9938);">1/13</span>
<span class="t" style="left:302.50px;top:134.14px;font-size:14.6px;color:#e0503e;transform:scaleX(0.9070);">17%</span>
<span class="t" style="left:305.00px;top:150.98px;font-size:5.1px;color:#e0503e;transform:scaleX(1.1126);">UNPAID</span>
<span class="t" style="left:377.10px;top:118.38px;font-size:9px;color:#0c3158;font-weight:700;transform:scaleX(0.9477);">May</span>
<span class="t" style="left:376.45px;top:128.28px;font-size:9px;color:#0c3158;font-weight:700;transform:scaleX(0.8936);">2018</span>
<span class="t" style="left:441.60px;top:134.14px;font-size:14.6px;color:#2ea68b;transform:scaleX(0.9412);">83%</span>
<span class="t" style="left:440.60px;top:150.98px;font-size:5.1px;color:#2ea68b;transform:scaleX(0.9713);">COLLECTED</span>
<span class="t" style="left:566.80px;top:131.98px;font-size:7.7px;color:#4c4f54;transform:scaleX(0.8644);">Rent Collected</span>
<span class="t" style="left:555.50px;top:143.66px;font-size:12.1px;color:#2ea68b;-webkit-text-stroke:0.15px #2ea68b;transform:scaleX(0.9070);">$20,570.00</span>
<span class="t" style="left:538.20px;top:176.18px;font-size:7.7px;color:#4c4f54;transform:scaleX(0.8893);">Units with Invoices Paid</span>
<span class="t" style="left:582.00px;top:185.56px;font-size:12.1px;color:#4a4f57;transform:scaleX(0.9384);">12/13</span>
<span class="t" style="left:346.80px;top:186.59px;font-size:7.1px;color:#4c4f54;transform:scaleX(0.9149);">Rent Processing: $1,200.00</span>
<span class="t" style="left:352.60px;top:201.19px;font-size:7.1px;color:#0c3158;font-weight:700;transform:scaleX(0.9243);">Total Rent: $24,645.00</span>
<span class="t" style="left:567.30px;top:258.94px;font-size:6.8px;color:#6fa8dc;transform:scaleX(0.9882);">+ View 9 More</span>
<span class="t" style="left:176.90px;top:295.02px;font-size:8.6px;color:#4c4f54;-webkit-text-stroke:0.2px #4c4f54;transform:scaleX(0.9199);">Unsigned Leases</span>
<span class="t" style="left:171.80px;top:402.85px;font-size:7.5px;color:#0e3356;font-weight:700;transform:scaleX(0.8806);">Atlantic Lofts</span>
<span class="t" style="left:243.30px;top:403.61px;font-size:6.6px;color:#0d2a4c;font-weight:700;transform:scaleX(1.0249);"><i>0/</i>1</span>
<span class="t" style="left:190.40px;top:429.51px;font-size:6.6px;color:#3a95db;font-weight:700;transform:scaleX(0.9096);">Send Reminder</span>
<span class="t" style="left:271.00px;top:402.85px;font-size:7.5px;color:#0e3356;font-weight:700;transform:scaleX(0.8778);">Vine Street Lofts</span>
<span class="t" style="left:342.60px;top:403.61px;font-size:6.6px;color:#0d2a4c;font-weight:700;transform:scaleX(1.0249);"><i>0/</i>1</span>
<span class="t" style="left:289.70px;top:429.51px;font-size:6.6px;color:#3a95db;font-weight:700;transform:scaleX(0.9096);">Send Reminder</span>
<span class="t" style="left:370.50px;top:402.85px;font-size:7.5px;color:#0e3356;font-weight:700;transform:scaleX(0.8318);">Bolyston SFH</span>
<span class="t" style="left:441.90px;top:403.61px;font-size:6.6px;color:#0d2a4c;font-weight:700;transform:scaleX(1.0249);"><i>0/</i>1</span>
<span class="t" style="left:389.00px;top:429.51px;font-size:6.6px;color:#3a95db;font-weight:700;transform:scaleX(0.9096);">Send Reminder</span>
<span class="t" style="left:469.50px;top:402.85px;font-size:7.5px;color:#0e3356;font-weight:700;transform:scaleX(0.9052);">Vine Street Apart&hellip;</span>
<span class="t" style="left:541.10px;top:403.61px;font-size:6.6px;color:#0d2a4c;font-weight:700;transform:scaleX(1.0249);"><i>0/</i>1</span>
<span class="t" style="left:488.20px;top:429.51px;font-size:6.6px;color:#3a95db;font-weight:700;transform:scaleX(0.9096);">Send Reminder</span>
<span class="t" style="left:568.90px;top:402.85px;font-size:7.5px;color:#0e3356;font-weight:700;transform:scaleX(0.8778);clip-path:inset(-2px 22.22px -2px 0);">Vine Street Lofts</span>
<span class="t" style="left:587.60px;top:429.51px;font-size:6.6px;color:#3a95db;font-weight:700;transform:scaleX(0.9096);clip-path:inset(-2px 32.98px -2px 0);">Send Reminder</span>
<span class="t" style="left:661.40px;top:93.06px;font-size:8.2px;color:#fff;font-weight:700;transform:scaleX(0.9687);">Record Payment</span>
<span class="t" style="left:791.70px;top:93.06px;font-size:8.2px;color:#fff;font-weight:700;transform:scaleX(0.9612);">Add Tenant</span>
<span class="t" style="left:651.90px;top:129.02px;font-size:8.6px;color:#4c4f54;-webkit-text-stroke:0.25px #4c4f54;transform:scaleX(1.0012);">Availability</span>
<span class="t" style="left:648.30px;top:155.84px;font-size:14.6px;color:#e0503e;transform:scaleX(0.9108);">6</span>
<span class="t" style="left:677.80px;top:155.84px;font-size:14.6px;color:#2ea68b;transform:scaleX(0.9116);">12</span>
<span class="t" style="left:642.00px;top:173.59px;font-size:7.1px;color:#666b73;transform:scaleX(0.9183);">Vacant</span>
<span class="t" style="left:671.00px;top:173.59px;font-size:7.1px;color:#666b73;transform:scaleX(0.9243);">Occupied</span>
<span class="t" style="left:829.90px;top:163.87px;font-size:7px;color:#0c3158;font-weight:700;transform:scaleX(0.9234);">18</span>
<span class="t" style="left:651.90px;top:208.62px;font-size:8.6px;color:#4c4f54;-webkit-text-stroke:0.25px #4c4f54;transform:scaleX(0.9424);">Open Maintenance Requests</span>
<span class="t" style="left:687.40px;top:245.54px;font-size:12px;color:#2ea68b;transform:scaleX(0.8972);">2</span>
<span class="t" style="left:669.50px;top:264.69px;font-size:7.1px;color:#4c4f54;transform:scaleX(0.8994);">New Requests</span>
<span class="t" style="left:798.10px;top:245.54px;font-size:12px;color:#e0503e;transform:scaleX(0.8972);">2</span>
<span class="t" style="left:776.60px;top:264.69px;font-size:7.1px;color:#4c4f54;transform:scaleX(0.9223);">Urgent Requests</span>
<span class="t" style="left:642.00px;top:312.82px;font-size:8.6px;color:#0c3158;font-weight:700;transform:scaleX(0.9481);">By Category</span>
<span class="t" style="left:646.75px;top:329.37px;font-size:5px;color:#666;transform:scaleX(0.9000);">3</span>
<span class="t" style="left:646.75px;top:365.37px;font-size:5px;color:#666;transform:scaleX(0.9000);">2</span>
<span class="t" style="left:646.75px;top:399.77px;font-size:5px;color:#666;transform:scaleX(0.9000);">1</span>
<span class="t" style="left:646.75px;top:434.97px;font-size:5px;color:#666;transform:scaleX(0.9000);">0</span>
<span class="t" style="left:668.32px;top:394.76px;font-size:5.6px;color:#14213d;font-weight:700;transform:scaleX(0.9500);">1</span>
<span class="t" style="left:694.72px;top:357.26px;font-size:5.6px;color:#14213d;font-weight:700;transform:scaleX(0.9500);">2</span>
<span class="t" style="left:721.12px;top:394.76px;font-size:5.6px;color:#14213d;font-weight:700;transform:scaleX(0.9500);">1</span>
<span class="t" style="left:747.52px;top:427.66px;font-size:5.6px;color:#14213d;font-weight:700;transform:scaleX(0.9500);">0</span>
<span class="t" style="left:773.92px;top:394.76px;font-size:5.6px;color:#14213d;font-weight:700;transform:scaleX(0.9500);">1</span>
<span class="t" style="left:800.32px;top:357.26px;font-size:5.6px;color:#14213d;font-weight:700;transform:scaleX(0.9500);">2</span>
<span class="t" style="left:826.72px;top:394.76px;font-size:5.6px;color:#14213d;font-weight:700;transform:scaleX(0.9500);">1</span>
<span class="t" style="left:491.70px;top:481.84px;font-size:6.1px;color:#4c4f54;transform:scaleX(0.8989);">&copy; 2018 Innago LLC</span>
<span class="t" style="left:649.96px;top:93.75px;font-size:6.2px;color:#fff;font-weight:700;transform:scaleX(0.9500);">$</span>
</body>
</html>
